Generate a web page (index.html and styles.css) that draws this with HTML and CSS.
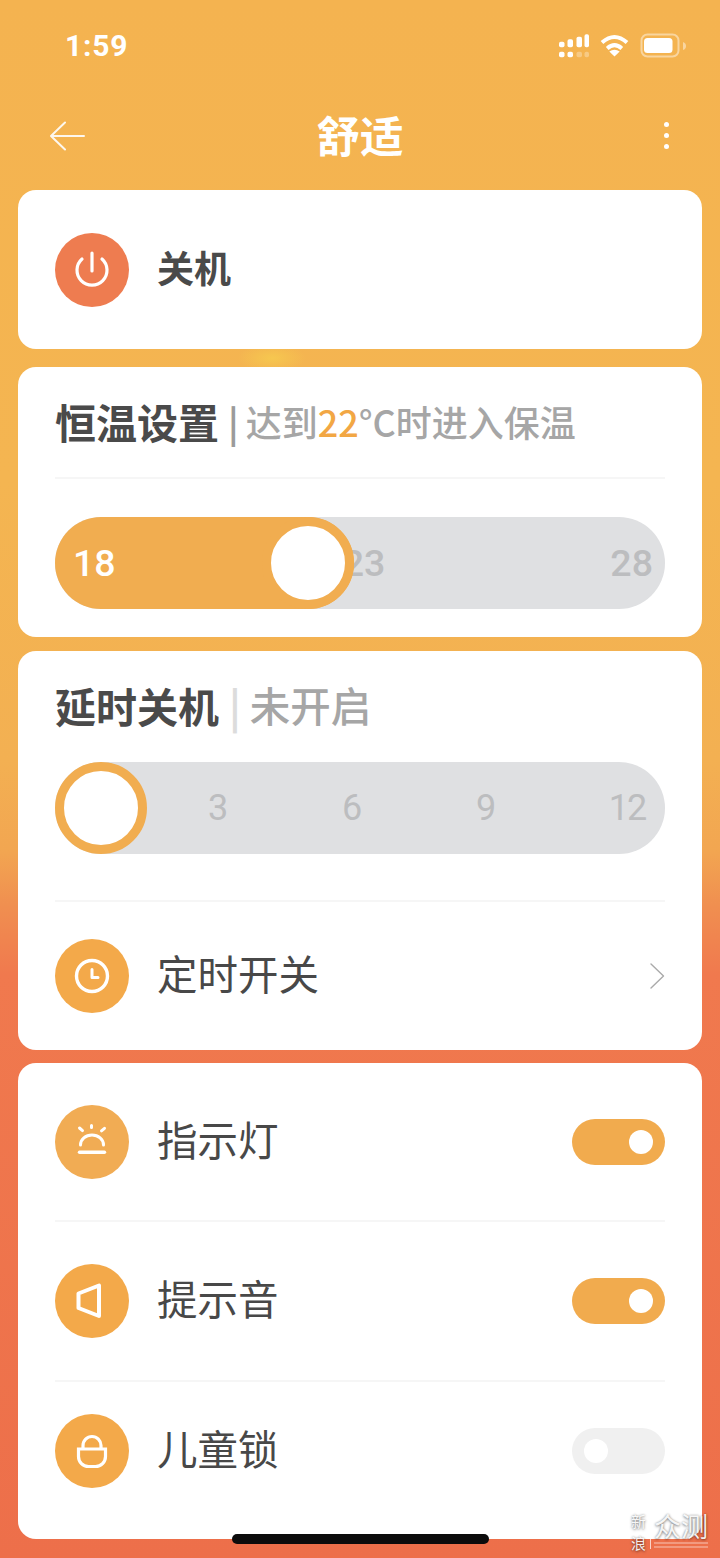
FILE: index.html
```html
<!DOCTYPE html>
<html lang="zh">
<head>
    <meta charset="utf-8">
    <meta name="viewport" content="width=device-width, initial-scale=1.0">
    <title>舒适</title>
    <link rel="stylesheet" href="styles.css">
</head>
<body>
<div class="page">
    <div class="status-bar">
        <span class="status-time">1:59</span>
        <div class="status-icons">
            <svg class="icon-signal" width="32" height="28" viewBox="0 0 32 28" fill="#fff">
                <rect x="2" y="9.700" width="5.500" height="5.500" rx="1.800"/>
                <rect x="10.500" y="7.300" width="5.500" height="7.900" rx="1.800"/>
                <rect x="19.500" y="4.700" width="5.500" height="10.500" rx="1.800"/>
                <rect x="27.500" y="2.300" width="4.500" height="12.900" rx="1.800"/>
                <rect x="2" y="19.700" width="5.500" height="5.500" rx="1.800"/>
                <rect x="10.500" y="19.700" width="5.500" height="5.500" rx="1.800"/>
                <rect x="19.500" y="19.700" width="5.500" height="5.500" rx="1.800" opacity=".3"/>
                <rect x="27.500" y="19.700" width="4.500" height="5.500" rx="1.800" opacity=".3"/>
            </svg>
            <svg class="icon-wifi" width="32" height="25" viewBox="0 0 32 25" fill="none" stroke="#fff" stroke-width="4">
                <path d="M3 9.500Q15.500 -1.500 28 9.500"/>
                <path d="M8.200 15.400Q15.500 9 22.800 15.400"/>
                <path d="M15.500 23.500L10.300 18.600Q15.500 14.800 20.700 18.600Z" fill="#fff" stroke="none"/>
            </svg>
            <svg class="icon-battery" width="48" height="25" viewBox="0 0 48 25">
                <rect x="1.500" y="1.500" width="37" height="22" rx="6" fill="none" stroke="#fff" stroke-width="2" opacity=".45"/>
                <rect x="4" y="5" width="28.500" height="15" rx="3.500" fill="#fff"/>
                <path d="M43 9v8q3-1 3-4t-3-4z" fill="#fff" opacity=".45"/>
            </svg>
        </div>
    </div>

    <div class="nav-bar">
        <svg class="nav-back" width="38" height="36" viewBox="0 0 38 36" fill="none" stroke="#fff" stroke-width="2" stroke-linecap="round" stroke-linejoin="round" opacity=".9">
            <path d="M35 18H2M16 4.500L2 18l14 13.500"/>
        </svg>
        <h1 class="nav-title">舒适</h1>
        <div class="nav-more"><i></i><i></i><i></i></div>
    </div>

    <section class="card card-power">
        <div class="row">
            <span class="round-icon round-icon-power">
                <svg width="74" height="74" viewBox="0 0 74 74" fill="none" stroke="#fff" stroke-width="3.200" stroke-linecap="round">
                    <path d="M27 26A15 15 0 1 0 47 26"/>
                    <path d="M37 20V38"/>
                </svg>
            </span>
            <span class="row-label row-label-strong">关机</span>
        </div>
    </section>

    <section class="card card-temp">
        <div class="card-head card-head-temp">
            <span class="head-title">恒温设置</span>
            <span class="head-bar">|</span>
            <span class="head-sub">达到<b class="head-value">22</b>°C时进入保温</span>
        </div>
        <div class="slider slider-temp">
            <div class="slider-fill"></div>
            <div class="slider-thumb slider-thumb-temp"></div>
            <span class="temp-label temp-label-on">18</span>
            <span class="temp-label temp-label-mid">23</span>
            <span class="temp-label temp-label-end">28</span>
        </div>
    </section>

    <section class="card card-delay">
        <div class="card-head card-head-delay">
            <span class="head-title">延时关机</span>
            <span class="head-bar head-bar-light">|</span>
            <span class="head-sub head-sub-big">未开启</span>
        </div>
        <div class="slider slider-delay">
            <div class="slider-thumb slider-thumb-delay"></div>
            <span class="delay-label">3</span>
            <span class="delay-label">6</span>
            <span class="delay-label">9</span>
            <span class="delay-label delay-label-last">12</span>
        </div>
        <div class="divider divider-delay"></div>
        <div class="row row-timer">
            <span class="round-icon">
                <svg width="74" height="74" viewBox="0 0 74 74" fill="none" stroke="#fff" stroke-width="3.400" stroke-linecap="round" stroke-linejoin="round">
                    <circle cx="37" cy="37" r="15.500"/>
                    <path d="M37 30.500V38.500H43" stroke-width="3"/>
                </svg>
            </span>
            <span class="row-label">定时开关</span>
            <svg class="row-chevron" width="16" height="26" viewBox="0 0 16 26" fill="none" stroke="#aaa" stroke-width="1.400" stroke-linecap="round" stroke-linejoin="round">
                <path d="M2 1L14.500 13L2 25"/>
            </svg>
        </div>
    </section>

    <section class="card card-options">
        <div class="row">
            <span class="round-icon round-icon-soft">
                <svg width="74" height="74" viewBox="0 0 74 74" fill="none" stroke="#fff" stroke-width="3" stroke-linecap="round">
                    <path d="M25.500 40A11.500 10 0 0 1 48.500 40"/>
                    <path d="M24.500 47.300H49.500" stroke-width="3.400"/>
                    <path d="M36.500 20.500V22.500M24.500 23L27.500 25.600M49.500 23.300L46.500 25.800"/>
                </svg>
            </span>
            <span class="row-label">指示灯</span>
            <span class="toggle toggle-on"><i></i></span>
        </div>
        <div class="divider divider-option-1"></div>
        <div class="row row-option-second">
            <span class="round-icon">
                <svg width="74" height="74" viewBox="0 0 74 74" fill="none" stroke="#fff" stroke-width="4" stroke-linejoin="round">
                    <path d="M23.500 29.500L44 21.500V52L23.500 44Z"/>
                </svg>
            </span>
            <span class="row-label">提示音</span>
            <span class="toggle toggle-on"><i></i></span>
        </div>
        <div class="divider divider-option-2"></div>
        <div class="row row-option-third">
            <span class="round-icon">
                <svg width="74" height="74" viewBox="0 0 74 74" fill="none" stroke="#fff" stroke-width="3.200" stroke-linecap="round">
                    <path d="M23.500 35H50.500V42.500A10 10 0 0 1 40.500 52.500H33.500A10 10 0 0 1 23.500 42.500Z"/>
                    <path d="M28 34V31.500A9 9 0 0 1 46 31.500V34"/>
                </svg>
            </span>
            <span class="row-label">儿童锁</span>
            <span class="toggle toggle-off"><i></i></span>
        </div>
    </section>

    <div class="home-bar"></div>

    <div class="watermark">
        <div class="watermark-brand"><span>新</span><span>浪</span></div>
        <span class="watermark-line"></span>
        <div class="watermark-main">
            <span class="watermark-name">众测</span>
            <i></i>
            <i></i>
        </div>
    </div>
</div>
</body>
</html>
```

FILE: styles.css
```css
* {
    box-sizing: border-box;
}
html, body {
    margin: 0;
    padding: 0;
}
body {
    font-family: "Noto Sans CJK SC", "Noto Sans", sans-serif;
    color: #444;
}
.page {
    position: relative;
    width: 720px;
    height: 1558px;
    padding: 0 18px;
    overflow: hidden;
    background:
        radial-gradient(ellipse 34px 14px at 272px 358px, #f6c74f 0%, rgba(246, 199, 79, 0) 100%),
        linear-gradient(180deg, #f4b350 0, #f4b551 480px, #f3b052 760px, #f2a651 850px, #f08f50 905px, #f0794e 975px, #ed6f4a 1558px);
}

/* status bar */
.status-bar {
    display: flex;
    align-items: center;
    justify-content: space-between;
    height: 91px;
    padding: 0 14px 0 47px;
}
.status-time {
    font-family: Roboto, sans-serif;
    font-size: 30px;
    font-weight: 700;
    letter-spacing: 0.8px;
    color: #fff;
}
.status-icons {
    display: flex;
    align-items: center;
    gap: 10px;
}
.icon-battery {
    margin-left: -1px;
}

/* nav */
.nav-bar {
    display: grid;
    grid-template-columns: 1fr auto 1fr;
    align-items: center;
    height: 89px;
    padding: 0 31px;
}
.nav-title {
    margin: 0;
    padding-bottom: 2px;
    font-size: 43.500px;
    font-weight: 700;
    line-height: 60px;
    color: #fff;
    text-align: center;
}
.nav-more {
    display: flex;
    flex-direction: column;
    gap: 6px;
    justify-self: end;
    margin-right: 2.500px;
}
.nav-more i {
    display: block;
    width: 5px;
    height: 5px;
    border-radius: 50%;
    background: #fff;
}

/* cards */
.card {
    padding: 0 37px;
    background: #fff;
    border-radius: 18px;
}
.card-power {
    height: 159px;
    padding-top: 43px;
    margin-top: 10px;
}
.card-temp {
    height: 270px;
    margin-top: 18px;
}
.card-delay {
    height: 399px;
    margin-top: 14px;
}
.card-options {
    height: 476px;
    padding-top: 42px;
    margin-top: 13px;
}

.row {
    display: flex;
    align-items: center;
    height: 74px;
}
.round-icon {
    flex: none;
    width: 74px;
    height: 74px;
    margin-right: 28px;
    border-radius: 50%;
    background: #f3a94a;
}
.round-icon svg {
    display: block;
}
.round-icon-power {
    background: #ee7c50;
}
.round-icon-soft {
    background: #f1ac54;
}
.row-label {
    padding-bottom: 6px;
    font-size: 40.500px;
    line-height: 56px;
    color: #484848;
}
.row-label-strong {
    font-size: 37px;
    font-weight: 700;
    color: #4a4a4a;
}
.row-chevron {
    margin-left: auto;
}
.row-timer {
    margin-top: 37px;
}
.row-option-second {
    margin-top: 42px;
}
.row-option-third {
    margin-top: 32px;
}

/* card headings */
.card-head {
    display: flex;
    align-items: center;
}
.card-head-temp {
    height: 112px;
    padding-bottom: 2px;
    border-bottom: 2px solid #f6f6f6;
}
.card-head-delay {
    height: 111px;
    padding-bottom: 3px;
}
.head-title {
    font-size: 41px;
    font-weight: 700;
    line-height: 56px;
    color: #4a4a4a;
}
.head-bar {
    margin: 0 7px 0 9px;
    font-size: 36px;
    font-weight: 700;
    line-height: 56px;
    color: #9b9b9b;
}
.head-bar-light {
    margin: 0 9px 0 10px;
    font-size: 40px;
    color: #dcdcdc;
}
.head-sub {
    font-size: 36px;
    font-weight: 500;
    line-height: 56px;
    color: #a6a6a6;
}
.head-sub-big {
    font-size: 40.500px;
}
.head-value {
    font-weight: 500;
    color: #f2a744;
}

/* sliders */
.slider {
    position: relative;
    display: flex;
    align-items: center;
    height: 92px;
    border-radius: 46px;
    background: #dfe0e2;
    font-family: Roboto, sans-serif;
    font-size: 37.500px;
    color: #bcbdbf;
}
.slider-temp {
    margin-top: 38px;
}
.slider-fill {
    position: absolute;
    top: 0;
    left: 0;
    width: 299px;
    height: 92px;
    border-radius: 46px;
    background: #f1ad50;
}
.slider-thumb {
    position: absolute;
    top: 0;
    width: 92px;
    height: 92px;
    border: 9.500px solid #f1ad50;
    border-radius: 50%;
    background: #fff;
}
.slider-thumb-temp {
    left: 207px;
}
.slider-thumb-delay {
    left: 0;
}
.temp-label {
    font-weight: 500;
}
.temp-label-on {
    position: relative;
    margin-left: 18px;
    color: #fff;
}
.temp-label-mid {
    margin-left: 227px;
}
.temp-label-end {
    margin-left: auto;
    margin-right: 12px;
}
.delay-label {
    flex: none;
    width: 134px;
    text-align: center;
    font-size: 36px;
    font-weight: 400;
}
.delay-label:first-of-type {
    margin-left: 96px;
}
.delay-label-last {
    width: 148px;
    letter-spacing: -2px;
}

.divider {
    height: 2px;
    background: #f6f6f6;
}
.divider-delay {
    margin-top: 46px;
}
.divider-option-1 {
    margin-top: 41px;
}
.divider-option-2 {
    margin-top: 42px;
}

/* toggles */
.toggle {
    display: flex;
    align-items: center;
    width: 93px;
    height: 46px;
    margin-left: auto;
    padding: 0 12px;
    border-radius: 23px;
}
.toggle i {
    display: block;
    width: 24px;
    height: 24px;
    border-radius: 50%;
    background: #fff;
}
.toggle-on {
    justify-content: flex-end;
    background: #f1ab4e;
}
.toggle-off {
    background: #f0f0f0;
}

/* overlays */
.home-bar {
    position: absolute;
    left: 232px;
    top: 1534px;
    width: 257px;
    height: 10px;
    border-radius: 5px;
    background: #0c0c0c;
}
.watermark {
    position: absolute;
    left: 631px;
    top: 1510px;
    display: flex;
    color: rgba(255, 255, 255, 0.92);
    text-shadow: 0 1px 3px rgba(0, 0, 0, 0.45), 0 0 2px rgba(0, 0, 0, 0.3);
}
.watermark-brand {
    display: flex;
    flex-direction: column;
    width: 16px;
    font-size: 15px;
    line-height: 22px;
}
.watermark-line {
    width: 1px;
    height: 36px;
    margin: 3px 3px 0 3px;
    background: rgba(255, 255, 255, 0.7);
}
.watermark-main {
    display: flex;
    flex-direction: column;
    gap: 2px;
    padding-top: 1px;
}
.watermark-main i {
    display: block;
    width: 54px;
    height: 2px;
    background: rgba(255, 255, 255, 0.3);
}
.watermark-name {
    font-size: 27px;
    line-height: 29px;
}
```
